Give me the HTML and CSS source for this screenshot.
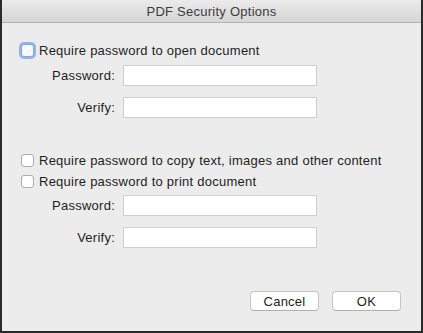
FILE: index.html
```html
<!DOCTYPE html>
<html>
  <head>
    <meta charset="utf-8">
    <title>PDF Security Options</title>
    <link rel="stylesheet" href="styles.css">
  </head>
  <body>
    <div class="dialog">
      <header class="titlebar">PDF Security Options</header>
      <main class="content">
        <label class="check-row">
          <span class="check focused"></span>
          <span>Require password to open document</span>
        </label>
        <div class="fields first-group">
          <div class="field">
            <span class="field-label">Password:</span>
            <span class="field-input"></span>
          </div>
          <div class="field">
            <span class="field-label">Verify:</span>
            <span class="field-input"></span>
          </div>
        </div>

        <label class="check-row second-group">
          <span class="check"></span>
          <span>Require password to copy text, images and other content</span>
        </label>
        <label class="check-row tight">
          <span class="check"></span>
          <span>Require password to print document</span>
        </label>
        <div class="fields">
          <div class="field">
            <span class="field-label">Password:</span>
            <span class="field-input"></span>
          </div>
          <div class="field">
            <span class="field-label">Verify:</span>
            <span class="field-input"></span>
          </div>
        </div>

        <div class="buttons">
          <button type="button" class="btn">Cancel</button>
          <button type="button" class="btn">OK</button>
        </div>
      </main>
    </div>
  </body>
</html>
```

FILE: styles.css
```css
* {
  margin: 0;
  padding: 0;
  box-sizing: border-box;
}

body {
  font-family: "Liberation Sans", Arial, sans-serif;
  font-size: 13px;
  letter-spacing: 0.25px;
  color: #1e1e1e;
  background-color: #ececec;
}

.dialog {
  width: 423px;
  height: 333px;
  display: flex;
  flex-direction: column;
  background-color: #ececec;
  border-left: 2px solid #2b2b2b;
  border-right: 2px solid #2b2b2b;
  border-bottom: 2px solid #2b2b2b;
}

.titlebar {
  height: 23px;
  line-height: 23px;
  text-align: center;
  color: #3c3c3c;
  background: linear-gradient(#ebebeb, #d5d5d5);
  border-bottom: 1px solid #b3b3b3;
}

.content {
  flex: 1;
  display: flex;
  flex-direction: column;
  padding: 17px 20px 20px 18px;
}

.check-row {
  height: 20px;
  display: flex;
  align-items: center;
  gap: 5px;
  padding-left: 1px;
}

.check {
  width: 13px;
  height: 13px;
  border: 1px solid #acacac;
  border-radius: 3px;
  background-color: #fff;
}

.check.focused {
  border-color: #8aa6d6;
  box-shadow: 0 0 0 2px #93b4ea;
  background-color: #f7f9ff;
}

.fields {
  display: flex;
  flex-direction: column;
  gap: 11px;
  margin-top: 4px;
}

.first-group {
  margin-top: 5px;
}

.second-group {
  margin-top: 32px;
}

.tight {
  margin-top: 1px;
}

.field {
  display: flex;
  align-items: center;
}

.field-label {
  width: 95px;
  text-align: right;
  margin-right: 8px;
}

.field-input {
  width: 194px;
  height: 21px;
  background-color: #fff;
  border: 1px solid #cfcfcf;
}

.buttons {
  margin-top: auto;
  display: flex;
  justify-content: flex-end;
  gap: 13px;
}

.btn {
  width: 69px;
  height: 20px;
  font-family: inherit;
  font-size: 13px;
  letter-spacing: 0.25px;
  color: #1e1e1e;
  background-color: #fff;
  border: 1px solid #c4c4c4;
  border-bottom-color: #b0b0b0;
  border-radius: 4px;
}
```
